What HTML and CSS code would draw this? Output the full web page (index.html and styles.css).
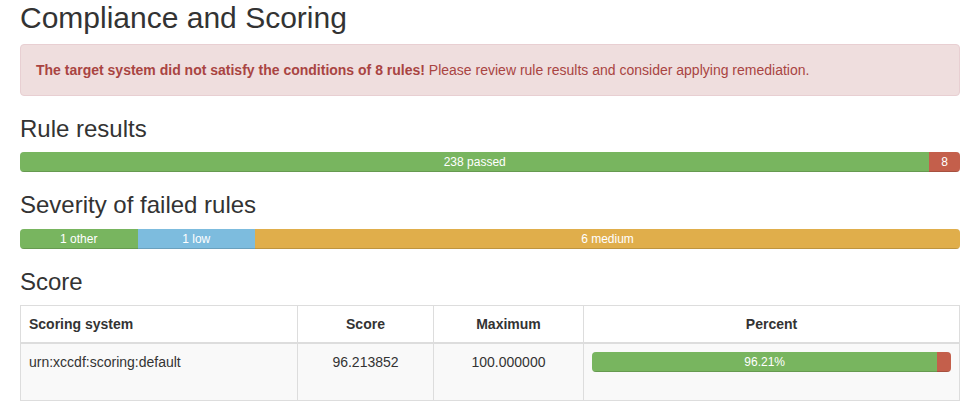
FILE: index.html
```html
<!DOCTYPE html>
<html lang="en">
<head>
<meta charset="utf-8">
<title>Compliance and Scoring</title>
<link rel="stylesheet" href="styles.css">
</head>
<body>
<div class="container">
  <h2 class="title">Compliance and Scoring</h2>
  <div class="alert">
    <strong>The target system did not satisfy the conditions of 8 rules!</strong> Please review rule results and consider applying remediation.
  </div>

  <h3 class="heading">Rule results</h3>
  <div class="progress">
    <div class="bar bar-pass" style="width: 96.75%">238 passed</div>
    <div class="bar bar-fail" style="width: 3.25%">8</div>
  </div>

  <h3 class="heading">Severity of failed rules</h3>
  <div class="progress">
    <div class="bar bar-pass" style="width: 12.5%">1 other</div>
    <div class="bar bar-low" style="width: 12.5%">1 low</div>
    <div class="bar bar-medium" style="width: 75%">6 medium</div>
  </div>

  <h3 class="heading">Score</h3>
  <table class="score">
    <thead>
      <tr>
        <th class="c-system">Scoring system</th>
        <th class="c-score center">Score</th>
        <th class="c-max center">Maximum</th>
        <th class="c-pct center">Percent</th>
      </tr>
    </thead>
    <tbody>
      <tr>
        <td>urn:xccdf:scoring:default</td>
        <td class="center">96.213852</td>
        <td class="center">100.000000</td>
        <td>
          <div class="progress">
            <div class="bar bar-pass" style="width: 96.21%">96.21%</div>
            <div class="bar bar-fail" style="width: 3.79%"></div>
          </div>
        </td>
      </tr>
    </tbody>
  </table>
</div>
</body>
</html>
```

FILE: styles.css
```css
* { box-sizing: border-box; }
html, body { margin: 0; padding: 0; background: #fff; }
body {
  font-family: "Liberation Sans", Arial, Helvetica, sans-serif;
  font-size: 14px;
  line-height: 1.42857143;
  color: #333;
}
.container {
  width: 940px;
  margin-left: 20px;
  padding-top: 1px;
}
.title {
  font-size: 30px;
  font-weight: 500;
  line-height: 1.1;
  margin: 0 0 10px 0;
}
.heading {
  font-size: 24px;
  font-weight: 500;
  line-height: 1.1;
  margin: 20px 0 10px 0;
}
.alert {
  padding: 15px;
  margin-bottom: 20px;
  border: 1px solid #e8cfd2;
  border-radius: 4px;
  background-color: #efdede;
  color: #a94442;
}
.alert strong { font-weight: 700; }
.progress {
  display: flex;
  height: 20px;
  margin-bottom: 20px;
  overflow: hidden;
  background-color: #f5f5f5;
  border-radius: 4px;
  box-shadow: inset 0 1px 2px rgba(0,0,0,.1);
}
.bar {
  height: 100%;
  font-size: 12px;
  line-height: 20px;
  color: #fff;
  text-align: center;
  white-space: nowrap;
  box-shadow: inset 0 -1px 0 rgba(0,0,0,.15);
}
.bar-pass { background-color: #78b55f; }
.bar-fail { background-color: #c45f4b; }
.bar-low { background-color: #7dbcde; }
.bar-medium { background-color: #e0ae4b; }

.score {
  width: 100%;
  border-collapse: collapse;
  border-spacing: 0;
  border: 1px solid #ddd;
  margin-bottom: 20px;
}
.score th, .score td {
  padding: 8px;
  border: 1px solid #ddd;
  line-height: 1.42857143;
  vertical-align: top;
}
.score th {
  text-align: left;
  font-weight: 700;
  border-bottom: 2px solid #ddd;
  vertical-align: bottom;
}
.score tbody tr { background-color: #f9f9f9; }
.score .center { text-align: center; }
.c-system { width: 277px; }
.c-score { width: 136px; }
.c-max { width: 150px; }
```
